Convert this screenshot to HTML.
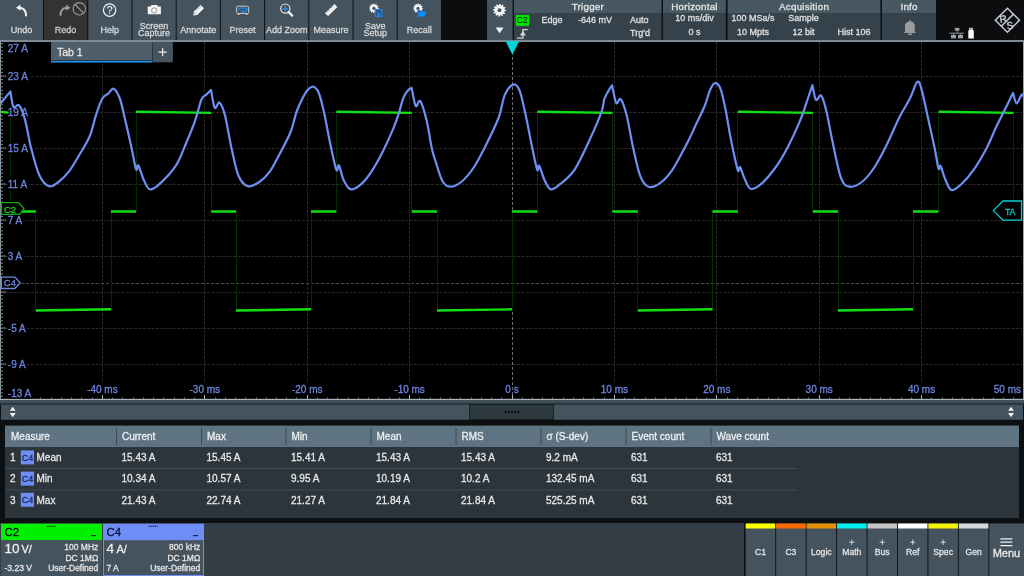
<!DOCTYPE html>
<html><head><meta charset="utf-8"><style>
html,body{margin:0;padding:0;background:#000;width:1024px;height:576px;overflow:hidden}
svg{display:block;font-family:"Liberation Sans",sans-serif;will-change:transform}
</style></head><body>
<svg width="1024" height="576" viewBox="0 0 1024 576">
<rect x="0" y="0" width="1024" height="40" fill="#0e1114" />
<rect x="0" y="0" width="43.0" height="40" fill="#44535e" />
<text x="21.5" y="32.6" font-size="9" fill="#d8d8d8" stroke="#d8d8d8" stroke-width="0.28" text-anchor="middle" >Undo</text>
<rect x="44.0" y="0" width="43.22" height="40" fill="#333333" />
<text x="65.61" y="32.6" font-size="9" fill="#c8c8c8" stroke="#c8c8c8" stroke-width="0.28" text-anchor="middle" >Redo</text>
<rect x="88.22" y="0" width="43.22" height="40" fill="#44535e" />
<text x="109.83" y="32.6" font-size="9" fill="#d8d8d8" stroke="#d8d8d8" stroke-width="0.28" text-anchor="middle" >Help</text>
<rect x="132.44" y="0" width="43.22" height="40" fill="#44535e" />
<text x="154.05" y="28.8" font-size="9" fill="#d8d8d8" stroke="#d8d8d8" stroke-width="0.28" text-anchor="middle" >Screen</text>
<text x="154.05" y="36" font-size="9" fill="#d8d8d8" stroke="#d8d8d8" stroke-width="0.28" text-anchor="middle" >Capture</text>
<rect x="176.66" y="0" width="43.22" height="40" fill="#44535e" />
<text x="198.26999999999998" y="32.6" font-size="9" fill="#d8d8d8" stroke="#d8d8d8" stroke-width="0.28" text-anchor="middle" >Annotate</text>
<rect x="220.88" y="0" width="43.22000000000003" height="40" fill="#44535e" />
<text x="242.49" y="32.6" font-size="9" fill="#d8d8d8" stroke="#d8d8d8" stroke-width="0.28" text-anchor="middle" >Preset</text>
<rect x="265.1" y="0" width="43.21999999999997" height="40" fill="#44535e" />
<text x="286.71000000000004" y="32.6" font-size="9" fill="#d8d8d8" stroke="#d8d8d8" stroke-width="0.28" text-anchor="middle" >Add Zoom</text>
<rect x="309.32" y="0" width="43.22000000000003" height="40" fill="#44535e" />
<text x="330.93" y="32.6" font-size="9" fill="#d8d8d8" stroke="#d8d8d8" stroke-width="0.28" text-anchor="middle" >Measure</text>
<rect x="353.54" y="0" width="43.21999999999997" height="40" fill="#44535e" />
<text x="375.15" y="28.8" font-size="9" fill="#d8d8d8" stroke="#d8d8d8" stroke-width="0.28" text-anchor="middle" >Save</text>
<text x="375.15" y="36" font-size="9" fill="#d8d8d8" stroke="#d8d8d8" stroke-width="0.28" text-anchor="middle" >Setup</text>
<rect x="397.76" y="0" width="43.22000000000003" height="40" fill="#44535e" />
<text x="419.37" y="32.6" font-size="9" fill="#d8d8d8" stroke="#d8d8d8" stroke-width="0.28" text-anchor="middle" >Recall</text>
<rect x="441" y="0" width="46" height="40" fill="#0b0c0d" />
<rect x="487" y="0" width="25.6" height="40" fill="#44535e" />
<path d="M26 15.5 C26 11 24 8.2 19.5 7.8" fill="none" stroke="#f4f4f4" stroke-width="2" stroke-linecap="round"/>
<path d="M16 7.7 L20.5 4.6 L20.5 10.8 Z" fill="#f4f4f4"/>
<path d="M60.5 15 C60.5 10.5 62.5 8.2 66.5 7.8" fill="none" stroke="#9a9a9a" stroke-width="2" stroke-linecap="round"/>
<path d="M70.5 7.7 L66 4.6 L66 10.8 Z" fill="#9a9a9a"/>
<circle cx="79.3" cy="8.8" r="6.2" fill="none" stroke="#9a9a9a" stroke-width="1.1"/>
<path d="M75 4.5 L83.6 13.1" stroke="#9a9a9a" stroke-width="1.1"/>
<circle cx="109.6" cy="10.1" r="6.2" fill="none" stroke="#f0f0f0" stroke-width="1.2"/>
<text x="109.7" y="13.8" font-size="10.5" fill="#e4e8ea" stroke="#e4e8ea" stroke-width="0.2" text-anchor="middle" >?</text>
<path d="M147.7 6.6 H150.5 L151.5 5 H157 L158 6.6 H160.9 V14.2 H147.7 Z" fill="#f4f4f4"/>
<circle cx="154.2" cy="10.4" r="2.6" fill="none" stroke="#808a91" stroke-width="0.9"/>
<path d="M193.2 15.5 L193.9 11.6 L200.6 4.9 L204 8.2 L197.2 15 Z" fill="#f4f4f4"/>
<path d="M196.9 10.5 L200.9 6.5" stroke="#6a7680" stroke-width="0.8" stroke-dasharray="0.8 0.5"/>
<path d="M194.6 13.9 L195.8 12.7" stroke="#44535e" stroke-width="1"/>
<rect x="236.6" y="6.2" width="12" height="7.3" rx="1" fill="none" stroke="#c8c8c8" stroke-width="1"/>
<path d="M237.8 14.3 h1.6 M245.8 14.3 h1.6" stroke="#c8c8c8" stroke-width="1.2"/>
<path d="M238.8 9.8 Q238.8 8.1 240.6 8.1 H245.3 Q246.9 8.1 246.9 9.8 Q246.9 11.5 245.3 11.5 H242.2" fill="none" stroke="#1a8ae8" stroke-width="1.3" stroke-linecap="round"/>
<path d="M240.3 11.5 L242.8 9.9 L242.8 13.1 Z" fill="#1a90f0"/>
<circle cx="285.3" cy="8.6" r="4.6" fill="none" stroke="#e8e8e8" stroke-width="1.2"/>
<path d="M288.6 12 L292.2 15.6" stroke="#f4f4f4" stroke-width="2.2" stroke-linecap="round"/>
<path d="M285.3 6.2 V11 M282.9 8.6 H287.7" stroke="#1e90ff" stroke-width="1.4"/>
<path d="M325 13.2 L334.4 3.9 L337.4 6.9 L328.1 16.1 Z" fill="#f4f4f4"/>
<path d="M326.69 11.53l0.9 0.9 M328.20 10.04l0.9 0.9 M329.70 8.55l0.9 0.9 M331.20 7.06l0.9 0.9 M332.71 5.57l0.9 0.9" stroke="#44535e" stroke-width="0.8"/>
<polygon points="378.80,8.30 378.76,8.94 377.59,9.29 377.43,9.76 378.14,10.75 377.79,11.28 376.60,11.00 376.23,11.33 376.35,12.54 375.78,12.83 374.89,11.99 374.40,12.09 373.90,13.20 373.26,13.16 372.91,11.99 372.44,11.83 371.45,12.54 370.92,12.19 371.20,11.00 370.87,10.63 369.66,10.75 369.37,10.18 370.21,9.29 370.11,8.80 369.00,8.30 369.04,7.66 370.21,7.31 370.37,6.84 369.66,5.85 370.01,5.32 371.20,5.60 371.57,5.27 371.45,4.06 372.02,3.77 372.91,4.61 373.40,4.51 373.90,3.40 374.54,3.44 374.89,4.61 375.36,4.77 376.35,4.06 376.88,4.41 376.60,5.60 376.93,5.97 378.14,5.85 378.43,6.42 377.59,7.31 377.69,7.80" fill="#f4f4f4"/>
<circle cx="373.9" cy="8.3" r="1.6" fill="#44535e"/>
<rect x="375.3" y="9.5" width="6.6" height="6.8" fill="#2f4a66" stroke="#1e88e8" stroke-width="1.1"/>
<rect x="377" y="12.6" width="3.3" height="3.2" fill="#0a90ff"/>
<path d="M377 10v2M380.3 10v2" stroke="#1e88e8" stroke-width="0.6"/>
<polygon points="422.90,8.30 422.86,8.94 421.69,9.29 421.53,9.76 422.24,10.75 421.89,11.28 420.70,11.00 420.33,11.33 420.45,12.54 419.88,12.83 418.99,11.99 418.50,12.09 418.00,13.20 417.36,13.16 417.01,11.99 416.54,11.83 415.55,12.54 415.02,12.19 415.30,11.00 414.97,10.63 413.76,10.75 413.47,10.18 414.31,9.29 414.21,8.80 413.10,8.30 413.14,7.66 414.31,7.31 414.47,6.84 413.76,5.85 414.11,5.32 415.30,5.60 415.67,5.27 415.55,4.06 416.12,3.77 417.01,4.61 417.50,4.51 418.00,3.40 418.64,3.44 418.99,4.61 419.46,4.77 420.45,4.06 420.98,4.41 420.70,5.60 421.03,5.97 422.24,5.85 422.53,6.42 421.69,7.31 421.79,7.80" fill="#f4f4f4"/>
<circle cx="418" cy="8.3" r="1.6" fill="#44535e"/>
<path d="M417.4 9.9 H420.2 L421.2 10.9 H424.8 V16.4 H417.4 Z" fill="#1a6fc4"/>
<path d="M417.4 16.4 L419.6 12 H426.4 L424.6 16.4 Z" fill="#0a90ff"/>
<polygon points="506.00,10.20 505.94,11.05 504.40,11.51 504.18,12.14 505.13,13.45 504.66,14.16 503.09,13.79 502.59,14.22 502.75,15.83 501.99,16.21 500.81,15.10 500.16,15.23 499.50,16.70 498.65,16.64 498.19,15.10 497.56,14.88 496.25,15.83 495.54,15.36 495.91,13.79 495.48,13.29 493.87,13.45 493.49,12.69 494.60,11.51 494.47,10.86 493.00,10.20 493.06,9.35 494.60,8.89 494.82,8.26 493.87,6.95 494.34,6.24 495.91,6.61 496.41,6.18 496.25,4.57 497.01,4.19 498.19,5.30 498.84,5.17 499.50,3.70 500.35,3.76 500.81,5.30 501.44,5.52 502.75,4.57 503.46,5.04 503.09,6.61 503.52,7.11 505.13,6.95 505.51,7.71 504.40,8.89 504.53,9.54" fill="#f4f4f4"/>
<circle cx="499.5" cy="10.2" r="1.9" fill="#44535e"/>
<path d="M495.6 27.6 H503.6 L499.6 33.2 Z" fill="#f4f4f4"/>
<rect x="514" y="0" width="147.5" height="13" fill="#485863" />
<rect x="514" y="13" width="147.5" height="27" fill="#35424b" />
<text x="587.85" y="10.1" font-size="9.8" fill="#e6e6e6" stroke="#e6e6e6" stroke-width="0.28" text-anchor="middle" letter-spacing="0.25">Trigger</text>
<rect x="663" y="0" width="62.799999999999955" height="13" fill="#485863" />
<rect x="663" y="13" width="62.799999999999955" height="27" fill="#35424b" />
<text x="694.5" y="10.1" font-size="9.8" fill="#e6e6e6" stroke="#e6e6e6" stroke-width="0.28" text-anchor="middle" letter-spacing="0.25">Horizontal</text>
<rect x="727.6" y="0" width="152.79999999999995" height="13" fill="#485863" />
<rect x="727.6" y="13" width="152.79999999999995" height="27" fill="#35424b" />
<text x="804.1" y="10.1" font-size="9.8" fill="#e6e6e6" stroke="#e6e6e6" stroke-width="0.28" text-anchor="middle" letter-spacing="0.25">Acquisition</text>
<rect x="882" y="0" width="54" height="13" fill="#485863" />
<rect x="882" y="13" width="54" height="27" fill="#35424b" />
<text x="909.1" y="10.1" font-size="9.8" fill="#e6e6e6" stroke="#e6e6e6" stroke-width="0.28" text-anchor="middle" letter-spacing="0.25">Info</text>
<rect x="936" y="0" width="88" height="40" fill="#0b0d0f" />
<rect x="515.8" y="15" width="13.2" height="10.8" fill="#00e600" />
<text x="522.2" y="23.1" font-size="8.6" fill="#0a0a0a" text-anchor="middle" >C2</text>
<text x="541.5" y="23.2" font-size="9" fill="#e0e0e0" stroke="#e0e0e0" stroke-width="0.28" text-anchor="start" >Edge</text>
<text x="612" y="23.2" font-size="9" fill="#e0e0e0" stroke="#e0e0e0" stroke-width="0.28" text-anchor="end" >-646 mV</text>
<text x="630" y="23.2" font-size="9" fill="#e0e0e0" stroke="#e0e0e0" stroke-width="0.28" text-anchor="start" >Auto</text>
<text x="630" y="36.3" font-size="9" fill="#e0e0e0" stroke="#e0e0e0" stroke-width="0.28" text-anchor="start" >Trg'd</text>
<path d="M517 38.1 H522.9 V29.7 H527.8" fill="none" stroke="#d0d4d6" stroke-width="1.3"/>
<path d="M522.9 30.8 L519.8 35.4 H526 Z" fill="#d0d4d6"/>
<text x="694.5" y="21" font-size="9" fill="#e0e0e0" stroke="#e0e0e0" stroke-width="0.28" text-anchor="middle" >10 ms/div</text>
<text x="694.5" y="34.7" font-size="9" fill="#e0e0e0" stroke="#e0e0e0" stroke-width="0.28" text-anchor="middle" >0 s</text>
<text x="753" y="21" font-size="9" fill="#e0e0e0" stroke="#e0e0e0" stroke-width="0.28" text-anchor="middle" >100 MSa/s</text>
<text x="803.6" y="21" font-size="9" fill="#e0e0e0" stroke="#e0e0e0" stroke-width="0.28" text-anchor="middle" >Sample</text>
<text x="753" y="34.7" font-size="9" fill="#e0e0e0" stroke="#e0e0e0" stroke-width="0.28" text-anchor="middle" >10 Mpts</text>
<text x="803.6" y="34.7" font-size="9" fill="#e0e0e0" stroke="#e0e0e0" stroke-width="0.28" text-anchor="middle" >12 bit</text>
<text x="870.5" y="34.7" font-size="9" fill="#e0e0e0" stroke="#e0e0e0" stroke-width="0.28" text-anchor="end" >Hist 106</text>
<path d="M905 32 V26.2 Q905 21.4 909.9 21.4 Q914.8 21.4 914.8 26.2 V32 L916.4 33.1 H903.4 Z" fill="#9a9c9e"/>
<circle cx="909.9" cy="20.9" r="0.9" fill="#9a9c9e"/>
<rect x="908" y="33.6" width="4" height="1.4" fill="#9a9c9e"/>
<g fill="#9ea2a6"><rect x="954.9" y="27.9" width="4.5" height="2.8"/><rect x="956.8" y="30.7" width="0.8" height="2"/><rect x="949.4" y="32.7" width="14.6" height="0.9"/><rect x="953.2" y="33.6" width="0.8" height="1.3"/><rect x="960.2" y="33.6" width="0.8" height="1.3"/><rect x="951" y="34.9" width="5" height="3.5"/><rect x="958" y="34.9" width="5" height="3.5"/></g>
<rect x="969" y="27.8" width="4.1" height="2" fill="#b8bcc0"/>
<path d="M968.3 31 L969 29.8 H973.1 L973.8 31 V38.5 H968.3 Z" fill="#f8f8f8"/>
<g fill="none" stroke="#c8ccd0" stroke-width="1.5"><path d="M1007.4 8.2 L1019.5 20.2 L1007.4 32.2 L995.3 20.2 Z"/><path d="M1013.5 14.1 L1001.3 26.3"/></g>
<text x="0" y="0" font-size="10" fill="#c8ccd0" stroke="#c8ccd0" stroke-width="0.4" text-anchor="middle" transform="translate(1003.8 22.3) rotate(-10)">R</text>
<text x="0" y="0" font-size="10" fill="#c8ccd0" stroke="#c8ccd0" stroke-width="0.4" text-anchor="middle" transform="translate(1010.6 29) rotate(-10)">S</text>
<rect x="0" y="40" width="1024" height="2" fill="#7d8a93" />
<rect x="0" y="42" width="1024" height="357" fill="#000000" />
<path d="M102.5 42V383 M204.5 42V383 M307.5 42V383 M409.5 42V383 M614.5 42V383 M716.5 42V383 M819.5 42V383 M921.5 42V383 M1 76.5H1022 M1 112.5H1022 M1 148.5H1022 M1 184.5H1022 M1 220.5H1022 M1 256.5H1022 M1 292.5H1022 M1 328.5H1022 M1 364.5H1022" stroke="#2a2a2a" stroke-width="1" stroke-dasharray="3 1.3" fill="none"/>
<path d="M512.5 42V398" stroke="#707070" stroke-width="1" stroke-dasharray="3 2" fill="none"/>
<path d="M21 283.5H1022" stroke="#4a4a4a" stroke-width="1" stroke-dasharray="3 2" fill="none"/>
<rect x="0" y="42" width="1" height="357" fill="#8a969e" />
<path d="M1 43.6h2 M1 47.2h2 M1 50.8h2 M1 54.4h2 M1 58.0h2 M1 61.6h2 M1 65.2h2 M1 68.8h2 M1 72.4h2 M1 76.0h5 M1 79.6h2 M1 83.2h2 M1 86.8h2 M1 90.4h2 M1 94.0h2 M1 97.6h2 M1 101.2h2 M1 104.8h2 M1 108.4h2 M1 112.0h5 M1 115.6h2 M1 119.2h2 M1 122.8h2 M1 126.4h2 M1 130.0h2 M1 133.6h2 M1 137.2h2 M1 140.8h2 M1 144.4h2 M1 148.0h5 M1 151.6h2 M1 155.2h2 M1 158.8h2 M1 162.4h2 M1 166.0h2 M1 169.6h2 M1 173.2h2 M1 176.8h2 M1 180.4h2 M1 184.0h5 M1 187.6h2 M1 191.2h2 M1 194.8h2 M1 198.4h2 M1 202.0h2 M1 205.6h2 M1 209.2h2 M1 212.8h2 M1 216.4h2 M1 220.0h5 M1 223.6h2 M1 227.2h2 M1 230.8h2 M1 234.4h2 M1 238.0h2 M1 241.6h2 M1 245.2h2 M1 248.8h2 M1 252.4h2 M1 256.0h5 M1 259.6h2 M1 263.2h2 M1 266.8h2 M1 270.4h2 M1 274.0h2 M1 277.6h2 M1 281.2h2 M1 284.8h2 M1 288.4h2 M1 292.0h5 M1 295.6h2 M1 299.2h2 M1 302.8h2 M1 306.4h2 M1 310.0h2 M1 313.6h2 M1 317.2h2 M1 320.8h2 M1 324.4h2 M1 328.0h5 M1 331.6h2 M1 335.2h2 M1 338.8h2 M1 342.4h2 M1 346.0h2 M1 349.6h2 M1 353.2h2 M1 356.8h2 M1 360.4h2 M1 364.0h5 M1 367.6h2 M1 371.2h2 M1 374.8h2 M1 378.4h2 M1 382.0h2 M1 385.6h2 M1 389.2h2 M1 392.8h2 M1 396.4h2" stroke="#8a969e" stroke-width="0.9" fill="none"/>
<rect x="1023" y="42" width="1" height="357" fill="#9aa6ae" />
<rect x="0" y="398.8" width="1024" height="1.3" fill="#a9b2b8" />
<path d="M10.5 399v-1.6 M20.5 399v-1.6 M30.5 399v-1.6 M40.5 399v-1.6 M51.5 399v-1.6 M61.5 399v-1.6 M71.5 399v-1.6 M81.5 399v-1.6 M92.5 399v-1.6 M112.5 399v-1.6 M122.5 399v-1.6 M133.5 399v-1.6 M143.5 399v-1.6 M153.5 399v-1.6 M163.5 399v-1.6 M174.5 399v-1.6 M184.5 399v-1.6 M194.5 399v-1.6 M215.5 399v-1.6 M225.5 399v-1.6 M235.5 399v-1.6 M245.5 399v-1.6 M256.5 399v-1.6 M266.5 399v-1.6 M276.5 399v-1.6 M286.5 399v-1.6 M296.5 399v-1.6 M317.5 399v-1.6 M327.5 399v-1.6 M337.5 399v-1.6 M348.5 399v-1.6 M358.5 399v-1.6 M368.5 399v-1.6 M378.5 399v-1.6 M389.5 399v-1.6 M399.5 399v-1.6 M419.5 399v-1.6 M430.5 399v-1.6 M440.5 399v-1.6 M450.5 399v-1.6 M460.5 399v-1.6 M471.5 399v-1.6 M481.5 399v-1.6 M491.5 399v-1.6 M501.5 399v-1.6 M522.5 399v-1.6 M532.5 399v-1.6 M542.5 399v-1.6 M552.5 399v-1.6 M563.5 399v-1.6 M573.5 399v-1.6 M583.5 399v-1.6 M593.5 399v-1.6 M604.5 399v-1.6 M624.5 399v-1.6 M634.5 399v-1.6 M645.5 399v-1.6 M655.5 399v-1.6 M665.5 399v-1.6 M675.5 399v-1.6 M686.5 399v-1.6 M696.5 399v-1.6 M706.5 399v-1.6 M727.5 399v-1.6 M737.5 399v-1.6 M747.5 399v-1.6 M757.5 399v-1.6 M768.5 399v-1.6 M778.5 399v-1.6 M788.5 399v-1.6 M798.5 399v-1.6 M808.5 399v-1.6 M829.5 399v-1.6 M839.5 399v-1.6 M849.5 399v-1.6 M860.5 399v-1.6 M870.5 399v-1.6 M880.5 399v-1.6 M890.5 399v-1.6 M901.5 399v-1.6 M911.5 399v-1.6 M931.5 399v-1.6 M942.5 399v-1.6 M952.5 399v-1.6 M962.5 399v-1.6 M972.5 399v-1.6 M983.5 399v-1.6 M993.5 399v-1.6 M1003.5 399v-1.6 M1013.5 399v-1.6" stroke="#66737b" stroke-width="1" fill="none"/>
<path d="M102.5 399v-4 M204.5 399v-4 M307.5 399v-4 M409.5 399v-4 M512.5 399v-4 M614.5 399v-4 M716.5 399v-4 M819.5 399v-4 M921.5 399v-4" stroke="#a9b2b8" stroke-width="1" fill="none"/>
<path d="M10.5 112.5V211.5 M35.5 211.5V310.5 M111.5 310.5V211.5 M136.5 211.5V112.5 M211.5 112.5V211.5 M236.5 211.5V310.5 M311.5 310.5V211.5 M336.5 211.5V112.5 M411.5 112.5V211.5 M437.5 211.5V310.5 M512.5 310.5V211.5 M537.5 211.5V112.5 M612.5 112.5V211.5 M637.5 211.5V310.5 M712.5 310.5V211.5 M737.5 211.5V112.5 M812.5 112.5V211.5 M838.5 211.5V310.5 M913.5 310.5V211.5 M938.5 211.5V112.5 M1013.5 112.5V211.5" stroke="#072a07" stroke-width="1" fill="none"/>
<path d="M0 111.7L10.5 112.9 M10.5 211.5L35.8 211.5 M35.8 310.5L111 309.3 M111 211.5L136 211.5 M136 111.7L211.2 112.9 M211.2 211.5L236 211.5 M236 310.5L311 309.3 M311 211.5L336.3 211.5 M336.3 111.7L411.8 112.9 M411.8 211.5L437 211.5 M437 310.5L512 309.3 M512 211.5L537.3 211.5 M537.3 111.7L612.3 112.9 M612.3 211.5L637.8 211.5 M637.8 310.5L712.5 309.3 M712.5 211.5L737.8 211.5 M737.8 111.7L812.8 112.9 M812.8 211.5L838 211.5 M838 310.5L913 309.3 M913 211.5L938.5 211.5 M938.5 111.7L1013.5 112.9 M1013.5 211.5L1022 211.5" stroke="#12e012" stroke-width="2.4" fill="none"/>
<rect x="8.6" y="43" width="21.01875" height="11" fill="#000" />
<text x="7.8" y="52" font-size="10" fill="#6f86e0" stroke="#6f86e0" stroke-width="0.28" text-anchor="start" >27 A</text>
<rect x="8.6" y="71.0" width="21.01875" height="11" fill="#000" />
<text x="7.8" y="80.0" font-size="10" fill="#6f86e0" stroke="#6f86e0" stroke-width="0.28" text-anchor="start" >23 A</text>
<rect x="8.6" y="107.0" width="21.01875" height="11" fill="#000" />
<text x="7.8" y="116.0" font-size="10" fill="#6f86e0" stroke="#6f86e0" stroke-width="0.28" text-anchor="start" >19 A</text>
<rect x="8.6" y="143.0" width="21.01875" height="11" fill="#000" />
<text x="7.8" y="152.0" font-size="10" fill="#6f86e0" stroke="#6f86e0" stroke-width="0.28" text-anchor="start" >15 A</text>
<rect x="8.6" y="179.0" width="20.2765625" height="11" fill="#000" />
<text x="7.8" y="188.0" font-size="10" fill="#6f86e0" stroke="#6f86e0" stroke-width="0.28" text-anchor="start" >11 A</text>
<rect x="8.6" y="215.0" width="15.4578125" height="11" fill="#000" />
<text x="7.8" y="224.0" font-size="10" fill="#6f86e0" stroke="#6f86e0" stroke-width="0.28" text-anchor="start" >7 A</text>
<rect x="8.6" y="251.0" width="15.4578125" height="11" fill="#000" />
<text x="7.8" y="260.0" font-size="10" fill="#6f86e0" stroke="#6f86e0" stroke-width="0.28" text-anchor="start" >3 A</text>
<rect x="8.6" y="323.0" width="18.7875" height="11" fill="#000" />
<text x="7.8" y="332.0" font-size="10" fill="#6f86e0" stroke="#6f86e0" stroke-width="0.28" text-anchor="start" >-5 A</text>
<rect x="8.6" y="359.0" width="18.7875" height="11" fill="#000" />
<text x="7.8" y="368.0" font-size="10" fill="#6f86e0" stroke="#6f86e0" stroke-width="0.28" text-anchor="start" >-9 A</text>
<rect x="8.6" y="387.6" width="24.3484375" height="11" fill="#000" />
<text x="7.8" y="396.6" font-size="10" fill="#6f86e0" stroke="#6f86e0" stroke-width="0.28" text-anchor="start" >-13 A</text>
<rect x="85.62031250000001" y="383.5" width="33.559375" height="11" fill="#000" />
<text x="102.4" y="392.7" font-size="10" fill="#6f86e0" stroke="#6f86e0" stroke-width="0.28" text-anchor="middle" >-40 ms</text>
<rect x="188.02031250000002" y="383.5" width="33.559375" height="11" fill="#000" />
<text x="204.8" y="392.7" font-size="10" fill="#6f86e0" stroke="#6f86e0" stroke-width="0.28" text-anchor="middle" >-30 ms</text>
<rect x="290.4203125" y="383.5" width="33.559375" height="11" fill="#000" />
<text x="307.20000000000005" y="392.7" font-size="10" fill="#6f86e0" stroke="#6f86e0" stroke-width="0.28" text-anchor="middle" >-20 ms</text>
<rect x="392.8203125" y="383.5" width="33.559375" height="11" fill="#000" />
<text x="409.6" y="392.7" font-size="10" fill="#6f86e0" stroke="#6f86e0" stroke-width="0.28" text-anchor="middle" >-10 ms</text>
<text x="512.0" y="392.7" font-size="10" fill="#6f86e0" stroke="#6f86e0" stroke-width="0.28" text-anchor="middle" >0 s</text>
<rect x="599.2851562500001" y="383.5" width="30.2296875" height="11" fill="#000" />
<text x="614.4000000000001" y="392.7" font-size="10" fill="#6f86e0" stroke="#6f86e0" stroke-width="0.28" text-anchor="middle" >10 ms</text>
<rect x="701.6851562500001" y="383.5" width="30.2296875" height="11" fill="#000" />
<text x="716.8000000000001" y="392.7" font-size="10" fill="#6f86e0" stroke="#6f86e0" stroke-width="0.28" text-anchor="middle" >20 ms</text>
<rect x="804.0851562500001" y="383.5" width="30.2296875" height="11" fill="#000" />
<text x="819.2" y="392.7" font-size="10" fill="#6f86e0" stroke="#6f86e0" stroke-width="0.28" text-anchor="middle" >30 ms</text>
<rect x="906.48515625" y="383.5" width="30.2296875" height="11" fill="#000" />
<text x="921.6" y="392.7" font-size="10" fill="#6f86e0" stroke="#6f86e0" stroke-width="0.28" text-anchor="middle" >40 ms</text>
<text x="1021" y="392.7" font-size="10" fill="#6f86e0" stroke="#6f86e0" stroke-width="0.28" text-anchor="end" >50 ms</text>
<path d="M0 104C1.73 101.92 6.93 95.67 10.4 91.5C11.43 96.67 12.03 104.68 13.5 107C14.97 109.32 17.28 103.30 19.2 105.4C21.12 107.50 22.99 112.38 25 119.6C27.01 126.82 28.82 139.38 31.25 148.75C33.68 158.12 36.64 169.55 39.6 175.8C42.56 182.05 45.87 185.22 49 186.25C52.13 187.28 55.10 184.43 58.4 182C61.70 179.57 65.33 176.20 68.8 171.7C72.27 167.20 75.77 160.91 79.25 155C82.73 149.09 86.92 142.85 89.7 136.25C92.48 129.65 93.82 121.65 95.9 115.4C97.98 109.15 100.12 102.40 102.2 98.75C104.28 95.10 106.50 95.17 108.4 93.5C110.30 91.83 111.68 87.88 113.6 88.75C115.52 89.62 117.98 93.61 119.9 98.75C121.82 103.89 123.20 111.61 125.1 119.6C127.00 127.59 129.48 138.43 131.3 146.7C133.12 154.97 134.83 166.07 136 169.2C137.17 172.33 137.00 163.70 138.3 165.5C139.60 167.30 141.85 176.02 143.8 180C145.75 183.98 147.22 188.88 150 189.4C152.78 189.92 156.17 187.10 160.5 183.1C164.83 179.10 171.68 172.17 176 165.4C180.32 158.63 183.28 149.78 186.4 142.5C189.53 135.22 192.23 128.87 194.75 121.7C197.27 114.53 199.59 103.98 201.5 99.5C203.41 95.02 204.62 96.38 206.2 94.8C207.78 93.22 209.40 91.60 211 90C212.25 95.93 213.32 105.70 214.75 107.8C216.18 109.90 217.89 101.33 219.6 102.6C221.31 103.87 223.07 108.05 225 115.4C226.93 122.75 228.95 136.63 231.2 146.7C233.45 156.77 235.72 169.21 238.5 175.8C241.28 182.39 244.43 185.22 247.9 186.25C251.37 187.28 255.66 184.43 259.3 182C262.94 179.57 266.27 176.55 269.75 171.7C273.23 166.85 276.72 159.52 280.2 152.9C283.68 146.28 287.83 138.94 290.6 132C293.37 125.06 294.57 117.32 296.8 111.25C299.03 105.18 302.10 99.24 304 95.6C305.90 91.96 306.63 90.88 308.2 89.4C309.77 87.92 311.67 86.18 313.4 86.7C315.13 87.22 316.87 88.41 318.6 92.5C320.33 96.59 321.90 102.92 323.8 111.25C325.70 119.58 327.92 132.78 330 142.5C332.08 152.22 334.80 165.78 336.3 169.6C337.80 173.42 337.78 163.67 339 165.4C340.22 167.13 341.62 176.00 343.6 180C345.58 184.00 347.78 188.88 350.9 189.4C354.02 189.92 358.66 186.40 362.3 183.1C365.94 179.80 369.27 174.98 372.75 169.6C376.23 164.22 379.72 157.75 383.2 150.8C386.68 143.85 391.00 134.13 393.6 127.9C396.20 121.67 397.42 117.67 398.8 113.4C400.18 109.13 400.93 105.32 401.9 102.3C402.87 99.28 403.53 97.35 404.6 95.3C405.67 93.25 407.13 91.25 408.3 90C409.47 88.75 410.50 88.53 411.6 87.8C412.97 93.87 414.23 103.77 415.7 106C417.17 108.23 418.53 98.58 420.4 101.2C422.27 103.82 424.98 113.78 426.9 121.7C428.82 129.62 430.35 141.82 431.9 148.75C433.45 155.68 434.45 157.93 436.2 163.3C437.95 168.68 440.15 177.10 442.4 181C444.65 184.90 446.57 186.53 449.7 186.7C452.83 186.87 457.20 185.20 461.2 182C465.20 178.80 469.53 173.73 473.7 167.5C477.87 161.27 482.03 152.93 486.2 144.6C490.37 136.27 495.58 125.83 498.7 117.5C501.82 109.17 502.47 100.08 504.9 94.6C507.32 89.12 510.82 85.30 513.25 84.6C515.68 83.90 517.42 85.27 519.5 90.4C521.58 95.53 523.67 106.02 525.75 115.4C527.83 124.78 530.09 137.67 532 146.7C533.91 155.73 535.98 166.42 537.2 169.6C538.42 172.78 538.08 164.07 539.3 165.8C540.52 167.53 542.59 176.07 544.5 180C546.41 183.93 548.18 188.70 550.75 189.4C553.32 190.10 555.92 187.50 559.9 184.2C563.88 180.90 569.38 177.59 574.6 169.6C579.83 161.61 586.73 145.97 591.25 136.25C595.77 126.53 599.53 117.42 601.7 111.25C603.88 105.08 603.27 102.42 604.3 99.2C605.33 95.98 606.62 94.22 607.9 91.9C609.18 89.58 610.63 87.50 612 85.3C613.42 91.17 614.78 100.58 616.25 102.9C617.72 105.22 619.06 97.12 620.8 99.2C622.54 101.28 624.68 107.48 626.7 115.4C628.72 123.32 630.65 136.63 632.9 146.7C635.15 156.77 637.60 169.13 640.2 175.8C642.80 182.47 645.20 185.48 648.5 186.7C651.80 187.92 656.00 185.95 660 183.1C664.00 180.25 667.83 176.53 672.5 169.6C677.17 162.67 684.03 149.14 688 141.5C691.97 133.86 693.52 129.67 696.3 123.75C699.08 117.83 702.43 111.56 704.7 106C706.97 100.44 708.22 94.22 709.9 90.4C711.58 86.58 713.07 83.45 714.8 83.1C716.53 82.75 718.52 83.95 720.3 88.3C722.08 92.65 723.77 100.87 725.5 109.2C727.23 117.53 728.68 128.23 730.7 138.3C732.72 148.37 736.03 164.82 737.6 169.6C739.17 174.38 738.99 165.62 740.1 167C741.21 168.38 742.52 174.28 744.25 177.9C745.98 181.53 747.73 187.70 750.5 188.75C753.27 189.80 756.73 187.74 760.9 184.2C765.07 180.66 770.98 173.75 775.5 167.5C780.02 161.25 783.83 154.68 788 146.7C792.17 138.72 797.20 127.59 800.5 119.6C803.80 111.61 805.82 104.48 807.8 98.75C809.78 93.02 810.87 89.72 812.4 85.2C813.57 90.07 814.43 98.07 815.9 99.8C817.37 101.53 819.45 93.69 821.2 95.6C822.95 97.51 824.48 103.43 826.4 111.25C828.32 119.07 830.27 131.39 832.7 142.5C835.13 153.61 838.23 170.53 841 177.9C843.77 185.27 845.83 186.02 849.3 186.7C852.77 187.38 857.63 185.20 861.8 182C865.97 178.80 870.13 173.73 874.3 167.5C878.47 161.27 882.63 152.93 886.8 144.6C890.97 136.27 895.47 125.14 899.3 117.5C903.12 109.86 906.75 104.68 909.75 98.75C912.75 92.82 915.32 83.43 917.3 81.9C919.27 80.38 919.83 83.67 921.6 89.6C923.37 95.53 925.71 107.64 927.9 117.5C930.09 127.36 932.98 140.25 934.75 148.75C936.52 157.25 937.52 165.66 938.5 168.5C939.48 171.34 939.57 164.23 940.6 165.8C941.63 167.37 942.92 173.87 944.7 177.9C946.48 181.93 948.53 188.95 951.3 190C954.07 191.05 957.55 187.60 961.3 184.2C965.05 180.80 969.63 175.51 973.8 169.6C977.97 163.69 982.47 156.05 986.3 148.75C990.12 141.45 993.27 133.09 996.75 125.8C1000.23 118.51 1004.49 110.48 1007.2 105C1009.91 99.52 1011.07 96.93 1013 92.9C1014.17 96.37 1015.04 103.02 1016.5 103.3C1017.96 103.58 1020.50 95.65 1021.75 94.6C1023.00 93.55 1023.62 96.60 1024 97" stroke="#6f8ff2" stroke-width="2.2" fill="none" stroke-linejoin="round"/>
<rect x="0" y="42" width="1" height="357" fill="#8a969e" />
<path d="M1.3 202.7 H18.5 L24 208.6 L19.6 214.4 H1.3 Z" fill="#000" stroke="#14a814" stroke-width="1.3"/>
<text x="3.9" y="212.7" font-size="9.5" fill="#14d814" stroke="#14d814" stroke-width="0.28" text-anchor="start" >C2</text>
<path d="M1.3 277.1 H14.9 L20.2 282.8 L14.9 288.5 H1.3 Z" fill="#000" stroke="#6f86e0" stroke-width="1.3"/>
<text x="3.8" y="286.4" font-size="9.5" fill="#6f86e0" stroke="#6f86e0" stroke-width="0.28" text-anchor="start" >C4</text>
<path d="M993.3 210.6 L1003 201 H1021.6 V220.2 H1003 Z" fill="#000" stroke="#00d2d2" stroke-width="1.3"/>
<text x="1010.2" y="215.4" font-size="8.8" fill="#00cccc" stroke="#00cccc" stroke-width="0.28" text-anchor="middle" >TA</text>
<path d="M505.5 41 H519.3 L512.4 54.8 Z" fill="#00d4d4"/>
<rect x="51" y="42" width="101.4" height="18.6" fill="#4e5e6a" />
<rect x="51" y="61" width="101.4" height="1.6" fill="#1a90e8" />
<rect x="152.4" y="42" width="20.5" height="20.3" fill="#46545f" />
<rect x="152.2" y="42" width="0.8" height="20.3" fill="#2a343a" />
<text x="57" y="55.6" font-size="10.5" fill="#e4e4e4" stroke="#e4e4e4" stroke-width="0.28" text-anchor="start" >Tab 1</text>
<path d="M162.6 48.2V56.2M158.6 52.2H166.6" stroke="#eeeeee" stroke-width="1.2"/>
<rect x="0" y="400" width="1024" height="125" fill="#0d1012" />
<rect x="0" y="400" width="1024" height="3.4" fill="#40505a" />
<rect x="0" y="403.4" width="1024" height="1.2" fill="#2f3b43" />
<rect x="1" y="404.6" width="1022" height="15.2" fill="#44535d" />
<rect x="469" y="404" width="85" height="16" fill="#1a1f22" />
<rect x="470" y="405" width="83" height="14" fill="#2e393f" />
<g fill="#0b0d0f"><rect x="505" y="411" width="2" height="2"/><rect x="508" y="411" width="2" height="2"/><rect x="511" y="411" width="2" height="2"/><rect x="514" y="411" width="2" height="2"/><rect x="517" y="411" width="2" height="2"/></g>
<path d="M9.799999999999999 410.8 L12.7 406.8 L15.6 410.8 Z M9.799999999999999 413.1 L12.7 417.3 L15.6 413.1 Z" fill="#f4f4f4"/>
<path d="M1008.1 410.8 L1011 406.8 L1013.9 410.8 Z M1008.1 413.1 L1011 417.3 L1013.9 413.1 Z" fill="#f4f4f4"/>
<rect x="5" y="425.6" width="1014" height="21.4" fill="#5f7483" />
<rect x="5" y="447" width="1014" height="71" fill="#2c353b" />
<text x="11" y="440.1" font-size="10" fill="#eef0f2" stroke="#eef0f2" stroke-width="0.28" text-anchor="start" >Measure</text>
<rect x="116" y="428" width="1" height="16.8" fill="#3d4a53" />
<text x="122" y="440.1" font-size="10" fill="#eef0f2" stroke="#eef0f2" stroke-width="0.28" text-anchor="start" >Current</text>
<rect x="201" y="428" width="1" height="16.8" fill="#3d4a53" />
<text x="207" y="440.1" font-size="10" fill="#eef0f2" stroke="#eef0f2" stroke-width="0.28" text-anchor="start" >Max</text>
<rect x="285.5" y="428" width="1" height="16.8" fill="#3d4a53" />
<text x="291.5" y="440.1" font-size="10" fill="#eef0f2" stroke="#eef0f2" stroke-width="0.28" text-anchor="start" >Min</text>
<rect x="370.5" y="428" width="1" height="16.8" fill="#3d4a53" />
<text x="376.5" y="440.1" font-size="10" fill="#eef0f2" stroke="#eef0f2" stroke-width="0.28" text-anchor="start" >Mean</text>
<rect x="455.5" y="428" width="1" height="16.8" fill="#3d4a53" />
<text x="461.5" y="440.1" font-size="10" fill="#eef0f2" stroke="#eef0f2" stroke-width="0.28" text-anchor="start" >RMS</text>
<rect x="540.5" y="428" width="1" height="16.8" fill="#3d4a53" />
<text x="546.5" y="440.1" font-size="10" fill="#eef0f2" stroke="#eef0f2" stroke-width="0.28" text-anchor="start" >σ (S-dev)</text>
<rect x="625.5" y="428" width="1" height="16.8" fill="#3d4a53" />
<text x="631.5" y="440.1" font-size="10" fill="#eef0f2" stroke="#eef0f2" stroke-width="0.28" text-anchor="start" >Event count</text>
<rect x="710.5" y="428" width="1" height="16.8" fill="#3d4a53" />
<text x="716.5" y="440.1" font-size="10" fill="#eef0f2" stroke="#eef0f2" stroke-width="0.28" text-anchor="start" >Wave count</text>
<rect x="5" y="468" width="792" height="1" fill="#3e4b54" />
<rect x="5" y="489.5" width="792" height="1" fill="#3e4b54" />
<text x="10" y="461.2" font-size="10" fill="#e8e8e8" stroke="#e8e8e8" stroke-width="0.28" text-anchor="start" >1</text>
<rect x="20.8" y="450.4" width="13.2" height="14" fill="#6e8ef5" />
<text x="27.4" y="460.59999999999997" font-size="9" fill="#1e2a55" stroke="#1e2a55" stroke-width="0.28" text-anchor="middle" >C4</text>
<text x="36.5" y="461.2" font-size="10" fill="#e8e8e8" stroke="#e8e8e8" stroke-width="0.28" text-anchor="start" >Mean</text>
<text x="121.5" y="461.2" font-size="10" fill="#e8e8e8" stroke="#e8e8e8" stroke-width="0.28" text-anchor="start" >15.43 A</text>
<text x="206.5" y="461.2" font-size="10" fill="#e8e8e8" stroke="#e8e8e8" stroke-width="0.28" text-anchor="start" >15.45 A</text>
<text x="291.0" y="461.2" font-size="10" fill="#e8e8e8" stroke="#e8e8e8" stroke-width="0.28" text-anchor="start" >15.41 A</text>
<text x="376.0" y="461.2" font-size="10" fill="#e8e8e8" stroke="#e8e8e8" stroke-width="0.28" text-anchor="start" >15.43 A</text>
<text x="461.0" y="461.2" font-size="10" fill="#e8e8e8" stroke="#e8e8e8" stroke-width="0.28" text-anchor="start" >15.43 A</text>
<text x="546.0" y="461.2" font-size="10" fill="#e8e8e8" stroke="#e8e8e8" stroke-width="0.28" text-anchor="start" >9.2 mA</text>
<text x="631.0" y="461.2" font-size="10" fill="#e8e8e8" stroke="#e8e8e8" stroke-width="0.28" text-anchor="start" >631</text>
<text x="716.0" y="461.2" font-size="10" fill="#e8e8e8" stroke="#e8e8e8" stroke-width="0.28" text-anchor="start" >631</text>
<text x="10" y="482.4" font-size="10" fill="#e8e8e8" stroke="#e8e8e8" stroke-width="0.28" text-anchor="start" >2</text>
<rect x="20.8" y="471.59999999999997" width="13.2" height="14" fill="#6e8ef5" />
<text x="27.4" y="481.79999999999995" font-size="9" fill="#1e2a55" stroke="#1e2a55" stroke-width="0.28" text-anchor="middle" >C4</text>
<text x="36.5" y="482.4" font-size="10" fill="#e8e8e8" stroke="#e8e8e8" stroke-width="0.28" text-anchor="start" >Min</text>
<text x="121.5" y="482.4" font-size="10" fill="#e8e8e8" stroke="#e8e8e8" stroke-width="0.28" text-anchor="start" >10.34 A</text>
<text x="206.5" y="482.4" font-size="10" fill="#e8e8e8" stroke="#e8e8e8" stroke-width="0.28" text-anchor="start" >10.57 A</text>
<text x="291.0" y="482.4" font-size="10" fill="#e8e8e8" stroke="#e8e8e8" stroke-width="0.28" text-anchor="start" >9.95 A</text>
<text x="376.0" y="482.4" font-size="10" fill="#e8e8e8" stroke="#e8e8e8" stroke-width="0.28" text-anchor="start" >10.19 A</text>
<text x="461.0" y="482.4" font-size="10" fill="#e8e8e8" stroke="#e8e8e8" stroke-width="0.28" text-anchor="start" >10.2 A</text>
<text x="546.0" y="482.4" font-size="10" fill="#e8e8e8" stroke="#e8e8e8" stroke-width="0.28" text-anchor="start" >132.45 mA</text>
<text x="631.0" y="482.4" font-size="10" fill="#e8e8e8" stroke="#e8e8e8" stroke-width="0.28" text-anchor="start" >631</text>
<text x="716.0" y="482.4" font-size="10" fill="#e8e8e8" stroke="#e8e8e8" stroke-width="0.28" text-anchor="start" >631</text>
<text x="10" y="503.59999999999997" font-size="10" fill="#e8e8e8" stroke="#e8e8e8" stroke-width="0.28" text-anchor="start" >3</text>
<rect x="20.8" y="492.79999999999995" width="13.2" height="14" fill="#6e8ef5" />
<text x="27.4" y="502.99999999999994" font-size="9" fill="#1e2a55" stroke="#1e2a55" stroke-width="0.28" text-anchor="middle" >C4</text>
<text x="36.5" y="503.59999999999997" font-size="10" fill="#e8e8e8" stroke="#e8e8e8" stroke-width="0.28" text-anchor="start" >Max</text>
<text x="121.5" y="503.59999999999997" font-size="10" fill="#e8e8e8" stroke="#e8e8e8" stroke-width="0.28" text-anchor="start" >21.43 A</text>
<text x="206.5" y="503.59999999999997" font-size="10" fill="#e8e8e8" stroke="#e8e8e8" stroke-width="0.28" text-anchor="start" >22.74 A</text>
<text x="291.0" y="503.59999999999997" font-size="10" fill="#e8e8e8" stroke="#e8e8e8" stroke-width="0.28" text-anchor="start" >21.27 A</text>
<text x="376.0" y="503.59999999999997" font-size="10" fill="#e8e8e8" stroke="#e8e8e8" stroke-width="0.28" text-anchor="start" >21.84 A</text>
<text x="461.0" y="503.59999999999997" font-size="10" fill="#e8e8e8" stroke="#e8e8e8" stroke-width="0.28" text-anchor="start" >21.84 A</text>
<text x="546.0" y="503.59999999999997" font-size="10" fill="#e8e8e8" stroke="#e8e8e8" stroke-width="0.28" text-anchor="start" >525.25 mA</text>
<text x="631.0" y="503.59999999999997" font-size="10" fill="#e8e8e8" stroke="#e8e8e8" stroke-width="0.28" text-anchor="start" >631</text>
<text x="716.0" y="503.59999999999997" font-size="10" fill="#e8e8e8" stroke="#e8e8e8" stroke-width="0.28" text-anchor="start" >631</text>
<rect x="0" y="522.5" width="1024" height="53.5" fill="#333e46" />
<rect x="0" y="518" width="1024" height="5" fill="#0d1012" />
<rect x="1" y="523.7" width="101" height="16.8" fill="#00f000" />
<rect x="1" y="540.2" width="101" height="35.8" fill="#44535e" />
<text x="4.5" y="536" font-size="11.5" fill="#0a0a0a" stroke="#0a0a0a" stroke-width="0.28" text-anchor="start" >C2</text>
<g fill="#0a3a0a"><rect x="46.6" y="525.7" width="1.3" height="1.3"/><rect x="48.6" y="525.7" width="1.3" height="1.3"/><rect x="50.6" y="525.7" width="1.3" height="1.3"/><rect x="52.6" y="525.7" width="1.3" height="1.3"/><rect x="54.6" y="525.7" width="1.3" height="1.3"/></g>
<rect x="91" y="535" width="5" height="1.2" fill="#0a2a0a" />
<text x="4.5" y="552.6" font-size="13.5" fill="#eeeeee" stroke="#eeeeee" stroke-width="0.28" text-anchor="start" >10</text>
<text x="21.5" y="552.6" font-size="11" fill="#eeeeee" stroke="#eeeeee" stroke-width="0.28" text-anchor="start" >V/</text>
<text x="98.3" y="550.4" font-size="8.5" fill="#e6e6e6" stroke="#e6e6e6" stroke-width="0.28" text-anchor="end" >100 MHz</text>
<text x="98.3" y="561.2" font-size="8.5" fill="#e6e6e6" stroke="#e6e6e6" stroke-width="0.28" text-anchor="end" >DC 1MΩ</text>
<text x="98.3" y="571" font-size="8.5" fill="#e6e6e6" stroke="#e6e6e6" stroke-width="0.28" text-anchor="end" >User-Defined</text>
<text x="4.5" y="571" font-size="8.5" fill="#e6e6e6" stroke="#e6e6e6" stroke-width="0.28" text-anchor="start" >-3.23 V</text>
<rect x="103" y="523.7" width="101" height="52.3" fill="#6e8ef5" />
<rect x="104" y="540.2" width="99" height="34.8" fill="#44535e" />
<text x="106.5" y="536" font-size="11.5" fill="#0a1030" stroke="#0a1030" stroke-width="0.28" text-anchor="start" >C4</text>
<g fill="#1a2860"><rect x="148.6" y="525.7" width="1.3" height="1.3"/><rect x="150.6" y="525.7" width="1.3" height="1.3"/><rect x="152.6" y="525.7" width="1.3" height="1.3"/><rect x="154.6" y="525.7" width="1.3" height="1.3"/><rect x="156.6" y="525.7" width="1.3" height="1.3"/></g>
<rect x="193" y="535" width="5" height="1.2" fill="#1a2050" />
<text x="106.5" y="552.6" font-size="13.5" fill="#eeeeee" stroke="#eeeeee" stroke-width="0.28" text-anchor="start" >4</text>
<text x="116.5" y="552.6" font-size="11" fill="#eeeeee" stroke="#eeeeee" stroke-width="0.28" text-anchor="start" >A/</text>
<text x="200.3" y="550.4" font-size="8.5" fill="#e6e6e6" stroke="#e6e6e6" stroke-width="0.28" text-anchor="end" >800 kHz</text>
<text x="200.3" y="561.2" font-size="8.5" fill="#e6e6e6" stroke="#e6e6e6" stroke-width="0.28" text-anchor="end" >DC 1MΩ</text>
<text x="200.3" y="571" font-size="8.5" fill="#e6e6e6" stroke="#e6e6e6" stroke-width="0.28" text-anchor="end" >User-Defined</text>
<text x="106.5" y="571" font-size="8.5" fill="#e6e6e6" stroke="#e6e6e6" stroke-width="0.28" text-anchor="start" >7 A</text>
<rect x="744" y="523" width="280" height="53" fill="#0f1315" />
<rect x="745.7" y="523.5" width="29.5" height="52.5" fill="#44535e" />
<rect x="745.7" y="523.5" width="29.5" height="5" fill="#ffff00" />
<text x="760.45" y="555" font-size="8.6" fill="#e4e4e4" stroke="#e4e4e4" stroke-width="0.28" text-anchor="middle" >C1</text>
<rect x="776.1500000000001" y="523.5" width="29.5" height="52.5" fill="#44535e" />
<rect x="776.1500000000001" y="523.5" width="29.5" height="5" fill="#ff6a00" />
<text x="790.9000000000001" y="555" font-size="8.6" fill="#e4e4e4" stroke="#e4e4e4" stroke-width="0.28" text-anchor="middle" >C3</text>
<rect x="806.6" y="523.5" width="29.5" height="52.5" fill="#44535e" />
<rect x="806.6" y="523.5" width="29.5" height="5" fill="#e39100" />
<text x="821.35" y="555" font-size="8.6" fill="#e4e4e4" stroke="#e4e4e4" stroke-width="0.28" text-anchor="middle" >Logic</text>
<rect x="837.0500000000001" y="523.5" width="29.5" height="52.5" fill="#44535e" />
<rect x="837.0500000000001" y="523.5" width="29.5" height="5" fill="#00f0f0" />
<text x="851.8000000000001" y="555" font-size="8.6" fill="#e4e4e4" stroke="#e4e4e4" stroke-width="0.28" text-anchor="middle" >Math</text>
<path d="M851.8000000000001 539.6v5.2M849.2 542.2h5.2" stroke="#e4e4e4" stroke-width="0.9"/>
<rect x="867.5" y="523.5" width="29.5" height="52.5" fill="#44535e" />
<rect x="867.5" y="523.5" width="29.5" height="5" fill="#c4c4c4" />
<text x="882.25" y="555" font-size="8.6" fill="#e4e4e4" stroke="#e4e4e4" stroke-width="0.28" text-anchor="middle" >Bus</text>
<path d="M882.25 539.6v5.2M879.65 542.2h5.2" stroke="#e4e4e4" stroke-width="0.9"/>
<rect x="897.95" y="523.5" width="29.5" height="52.5" fill="#44535e" />
<rect x="897.95" y="523.5" width="29.5" height="5" fill="#ffffff" />
<text x="912.7" y="555" font-size="8.6" fill="#e4e4e4" stroke="#e4e4e4" stroke-width="0.28" text-anchor="middle" >Ref</text>
<path d="M912.7 539.6v5.2M910.1 542.2h5.2" stroke="#e4e4e4" stroke-width="0.9"/>
<rect x="928.4000000000001" y="523.5" width="29.5" height="52.5" fill="#44535e" />
<rect x="928.4000000000001" y="523.5" width="29.5" height="5" fill="#f4f400" />
<text x="943.1500000000001" y="555" font-size="8.6" fill="#e4e4e4" stroke="#e4e4e4" stroke-width="0.28" text-anchor="middle" >Spec</text>
<path d="M943.1500000000001 539.6v5.2M940.5500000000001 542.2h5.2" stroke="#e4e4e4" stroke-width="0.9"/>
<rect x="958.85" y="523.5" width="29.5" height="52.5" fill="#44535e" />
<rect x="958.85" y="523.5" width="29.5" height="5" fill="#d6d8da" />
<text x="973.6" y="555" font-size="8.6" fill="#e4e4e4" stroke="#e4e4e4" stroke-width="0.28" text-anchor="middle" >Gen</text>
<rect x="989.3" y="523.5" width="34.7" height="52.5" fill="#44535e" />
<path d="M1000.4 538.8h12M1000.4 542.2h12M1000.4 545.6h12" stroke="#f0f0f0" stroke-width="1.3"/>
<text x="1006.4" y="557.4" font-size="11" fill="#eeeeee" stroke="#eeeeee" stroke-width="0.28" text-anchor="middle" >Menu</text>
</svg></body></html>
